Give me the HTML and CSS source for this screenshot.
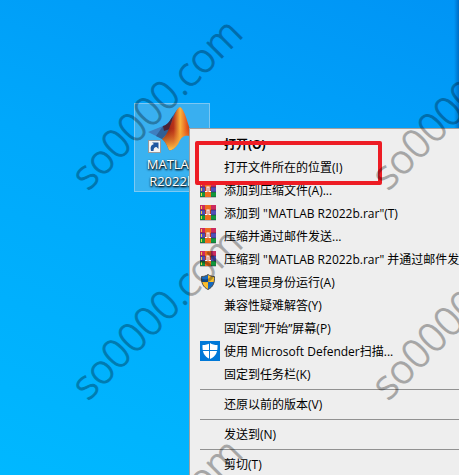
FILE: index.html
```html
<!DOCTYPE html>
<html lang="zh-CN">
<head>
  <meta charset="UTF-8" />
  <meta name="viewport" content="width=device-width, initial-scale=1.0"/>
  <title>MATLAB R2022b</title>
  <link rel="stylesheet" href="styles.css">
</head>
<body>
  <!-- shared icons -->
  <svg class="sprite" aria-hidden="true">
    <symbol id="rar" viewBox="0 0 16 16">
      <rect width="16" height="5" fill="#cc2a5e"/>
      <rect y="5" width="16" height="5" fill="#504eb8"/>
      <rect y="10" width="16" height="5" fill="#12963c"/>
      <path d="M0 5h16M0 10h16M0 15h16" stroke="#26203c" stroke-width=".5"/>
      <path d="M1.5 1v3M1.5 6v3M1.5 11v3" stroke="#f0d040" stroke-width="1"/>
      <rect x="5" width="6" height="15" fill="#ee6c1e"/>
      <rect x="5" y="5" width="6" height="5" fill="#c03c20"/>
      <path d="M5 9.500h2V5h2v4.500h2" fill="none" stroke="#fff" stroke-width="1.2"/>
    </symbol>
  </svg>

  <main class="desktop">
    <div class="shortcut">
      <svg class="shortcut-icon" viewBox="0 0 48 48" aria-hidden="true">
        <defs>
          <linearGradient id="peak" x1="0" x2="1">
            <stop offset="0" stop-color="#7c160c"/>
            <stop offset=".35" stop-color="#b8321a"/>
            <stop offset=".55" stop-color="#fbb43c"/>
            <stop offset=".75" stop-color="#e4571c"/>
            <stop offset="1" stop-color="#96220e"/>
          </linearGradient>
          <linearGradient id="foot" x1="0" y1="0" x2="0" y2="1">
            <stop offset=".5" stop-color="#f08024" stop-opacity="0"/>
            <stop offset="1" stop-color="#ffc848"/>
          </linearGradient>
        </defs>
        <path d="M0 26 15 20 22 24 14 33z" fill="#3f7fc0"/>
        <path d="M15 20C22 19 24 8 31 2L23 24 14 33 8 30z" fill="#315f95"/>
        <path d="M15 20c5-1 7-6 10-10l-3 13-6 2z" fill="#4b2437"/>
        <path d="M14 33C22 29 25 4 32 1c6 3 8 22 15 33-9-9-14-3-17 4-3 4-6 7-9 6-2-4-3-8-7-11z" fill="url(#peak)"/>
        <path d="M14 33C22 29 25 4 32 1c6 3 8 22 15 33-9-9-14-3-17 4-3 4-6 7-9 6-2-4-3-8-7-11z" fill="url(#foot)"/>
        <rect x=".5" y="34.5" width="12" height="12" fill="#f4f4f4" stroke="#9a9a9a"/>
        <path d="M3 45c-1-4 0-6 3-7L4 36.500h6.500V43L8.500 41c-2 0-3 1.500-3 4z" fill="#1f56a0"/>
      </svg>
      <span class="shortcut-name">MATLAB R2022b</span>
    </div>

    <div class="menu" role="menu">
      <button class="item default" role="menuitem"><span class="icon"></span>打开(O)</button>
      <button class="item" role="menuitem"><span class="icon"></span>打开文件所在的位置(I)</button>
      <button class="item" role="menuitem"><span class="icon"><svg class="small"><use href="#rar"/></svg></span>添加到压缩文件(A)...</button>
      <button class="item" role="menuitem"><span class="icon"><svg class="small"><use href="#rar"/></svg></span>添加到 "MATLAB R2022b.rar"(T)</button>
      <button class="item" role="menuitem"><span class="icon"><svg class="small"><use href="#rar"/></svg></span>压缩并通过邮件发送...</button>
      <button class="item" role="menuitem"><span class="icon"><svg class="small"><use href="#rar"/></svg></span>压缩到 "MATLAB R2022b.rar" 并通过邮件发送</button>
      <button class="item" role="menuitem">
        <span class="icon">
          <svg class="small" viewBox="0 0 16 16">
            <path d="M8 .5c2 1.500 4 2 6.500 2C14.800 9 13 13 8 15.500 3 13 1.200 9 1.500 2.500 4 2.500 6 2 8 .5z" fill="#fbbe2c"/>
            <path d="M8 .5V8H1.800C1.500 6 1.500 4 1.500 2.500 4 2.500 6 2 8 .5zM8 8h6.200c-.7 3.500-2.700 6-6.200 7.500z" fill="#1668bd"/>
            <path d="M8 .5c2 1.500 4 2 6.500 2C14.800 9 13 13 8 15.500 3 13 1.200 9 1.500 2.500 4 2.500 6 2 8 .5z" fill="none" stroke="#4d4f52"/>
          </svg>
        </span>以管理员身份运行(A)
      </button>
      <button class="item" role="menuitem"><span class="icon"></span>兼容性疑难解答(Y)</button>
      <button class="item" role="menuitem"><span class="icon"></span>固定到“开始”屏幕(P)</button>
      <button class="item" role="menuitem">
        <span class="icon">
          <svg class="large" viewBox="0 0 20 20">
            <rect width="20" height="20" fill="#0078d7"/>
            <path d="M10 2c2 1.400 4.500 2 7.500 2C17.800 11 16 15.500 10 18 4 15.500 2.200 11 2.500 4 5.500 4 8 3.400 10 2z" fill="#fff"/>
            <path d="M9.500 1v18M2 9.500h16" stroke="#0078d7"/>
          </svg>
        </span>使用 Microsoft Defender扫描...
      </button>
      <button class="item" role="menuitem"><span class="icon"></span>固定到任务栏(K)</button>
      <hr class="separator">
      <button class="item" role="menuitem"><span class="icon"></span>还原以前的版本(V)</button>
      <hr class="separator">
      <button class="item" role="menuitem"><span class="icon"></span>发送到(N)</button>
      <hr class="separator">
      <button class="item" role="menuitem"><span class="icon"></span>剪切(T)</button>
    </div>

    <div class="highlight"></div>

    <div class="watermark" aria-hidden="true">
      <span class="mark">so0000.com</span>
      <span class="mark">so0000.com</span>
      <span class="mark">so0000.com</span>
      <span class="mark">so0000.com</span>
      <span class="mark">so0000.com</span>
      <span class="mark">so0000.com</span>
    </div>
  </main>
</body>
</html>
```
FILE: styles.css
```css
:root {
  --menu-bg: #eeeeee;
  --menu-border: #a0a0a0;
  --line: #919191;
  --mark: #ed1c24;
}

* {
  box-sizing: border-box;
}

body {
  margin: 0;
  font-family: "Open Sans", "Noto Sans CJK SC", sans-serif;
  font-size: 12px;
  color: #000;
}

.sprite {
  display: none;
}

.desktop {
  position: relative;
  height: 100vh;
  overflow: hidden;
  background:
    linear-gradient(to left, rgba(0, 70, 150, 0.5), transparent 5px),
    linear-gradient(20deg, #00b8ff 0%, #00a8fb 55%, #0094f5 100%);
}

/* desktop shortcut */
.shortcut {
  position: absolute;
  left: 134px;
  top: 103px;
  width: 76px;
  height: 89px;
  padding-top: 2px;
  display: flex;
  flex-direction: column;
  align-items: center;
  background: rgba(190, 205, 220, 0.3);
  border: 1px solid rgba(170, 215, 245, 0.6);
}

.shortcut-icon {
  flex: none;
  width: 48px;
  height: 48px;
}

.shortcut-name {
  width: 60px;
  margin-top: 2px;
  color: #fff;
  font-size: 13px;
  line-height: 17px;
  text-align: center;
  text-shadow: 1px 1px 2px #000, 0 1px 2px rgba(0, 0, 0, 0.8);
}

/* context menu */
.menu {
  position: absolute;
  left: 189px;
  right: -40px;
  top: 128px;
  padding: 4px 0 4px 10px;
  background: var(--menu-bg);
  border: 1px solid var(--menu-border);
}

.item {
  display: flex;
  align-items: center;
  width: 100%;
  height: 23px;
  padding: 0 0 2px;
  border: none;
  background: none;
  color: inherit;
  font: inherit;
  white-space: nowrap;
}

.default {
  font-weight: bold;
}

.icon {
  flex: none;
  display: flex;
  width: 24px;
}

.small {
  width: 16px;
  height: 16px;
}

.large {
  width: 20px;
  height: 20px;
}

.separator {
  height: 1px;
  margin: 3px 0;
  border: none;
  background: var(--line);
}

.highlight {
  position: absolute;
  left: 195px;
  top: 141px;
  width: 187px;
  height: 44px;
  border: 4px solid var(--mark);
  border-radius: 2px;
}

/* repeated diagonal mark */
.watermark {
  position: absolute;
  left: 5px;
  top: -3px;
  display: grid;
  grid-template-columns: repeat(2, 300px);
  grid-auto-rows: 210px;
  place-items: center;
  pointer-events: none;
}

.mark {
  font-size: 40px;
  font-weight: 300;
  color: #000;
  -webkit-text-stroke: 1px #000;
  opacity: 0.3;
  transform: rotate(-45deg);
}
```
